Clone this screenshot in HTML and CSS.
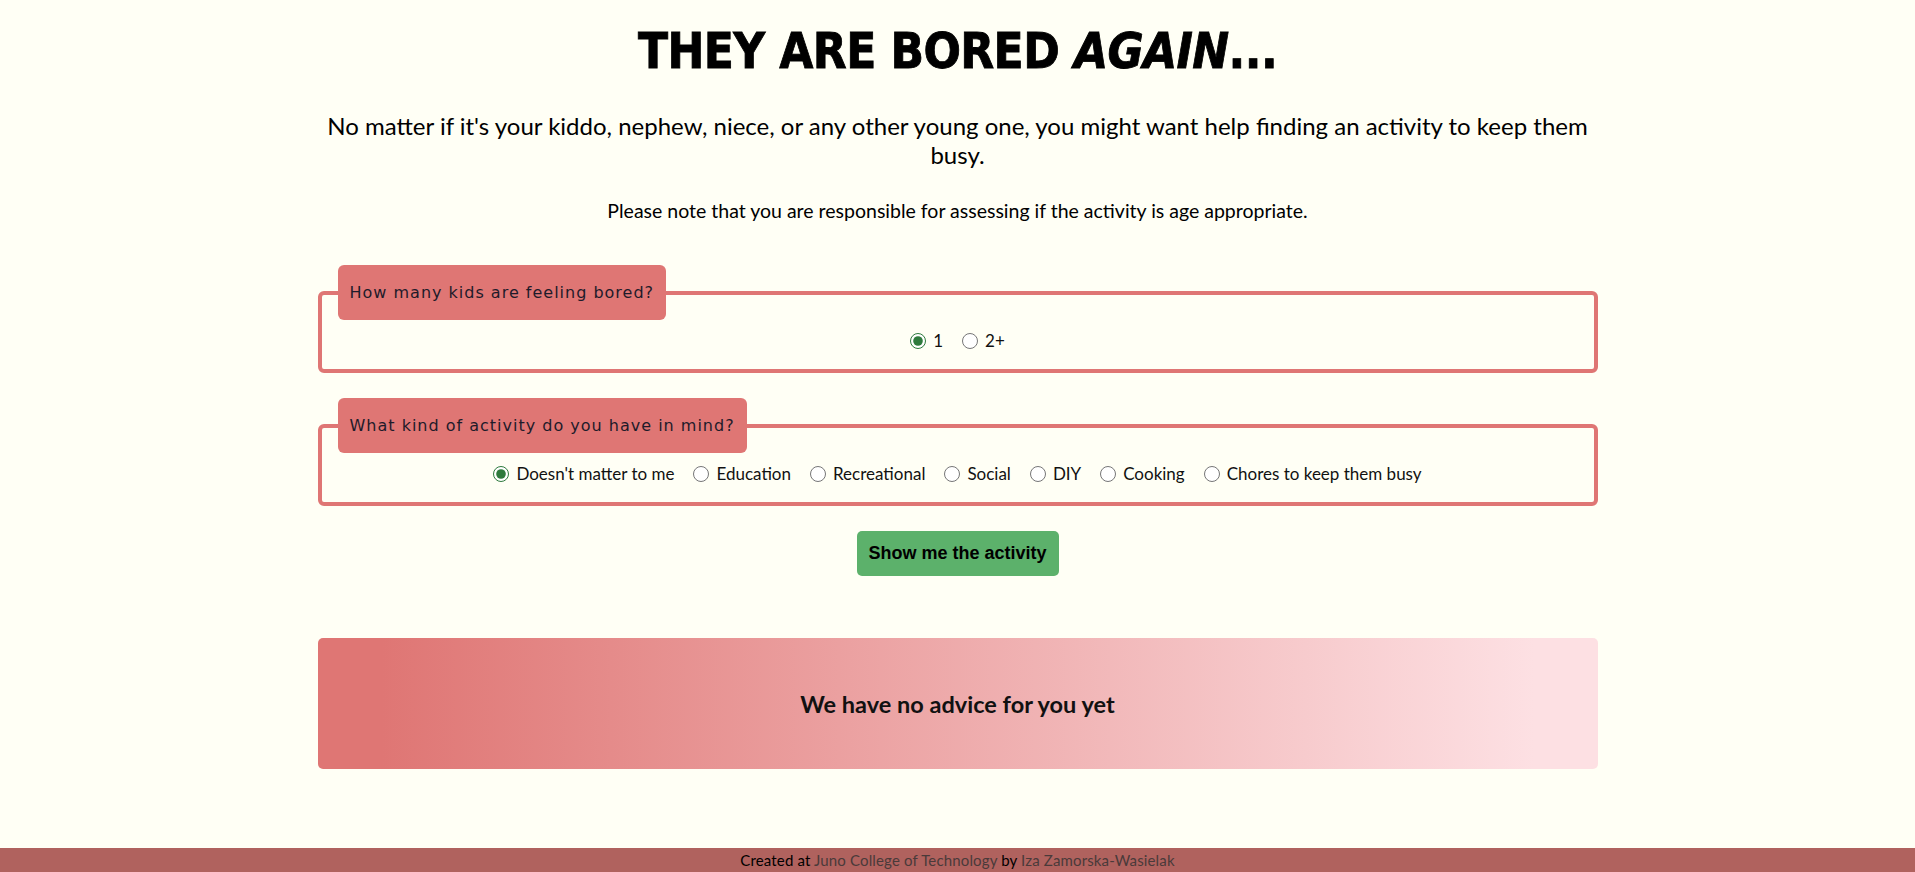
FILE: index.html
```html
<!DOCTYPE html>
<html lang="en">
<head>
<meta charset="utf-8">
<title>They are bored again...</title>
<link rel="stylesheet" href="styles.css">
</head>
<body>
<div class="page">
  <main class="wrapper">
    <header class="intro">
      <h1 class="title">THEY ARE BORED <em>AGAIN</em>...</h1>
      <p class="lead">No matter if it's your kiddo, nephew, niece, or any other young one, you might want help finding an activity to keep them busy.</p>
      <p class="note">Please note that you are responsible for assessing if the activity is age appropriate.</p>
    </header>

    <form class="form">
      <fieldset class="group">
        <legend class="group-title">How many kids are feeling bored?</legend>
        <div class="options">
          <label class="option"><input type="radio" name="kids" checked> 1</label>
          <label class="option"><input type="radio" name="kids"> 2+</label>
        </div>
      </fieldset>

      <fieldset class="group">
        <legend class="group-title">What kind of activity do you have in mind?</legend>
        <div class="options">
          <label class="option"><input type="radio" name="type" checked> Doesn't matter to me</label>
          <label class="option"><input type="radio" name="type"> Education</label>
          <label class="option"><input type="radio" name="type"> Recreational</label>
          <label class="option"><input type="radio" name="type"> Social</label>
          <label class="option"><input type="radio" name="type"> DIY</label>
          <label class="option"><input type="radio" name="type"> Cooking</label>
          <label class="option"><input type="radio" name="type"> Chores to keep them busy</label>
        </div>
      </fieldset>

      <div class="actions">
        <button type="button" class="submit">Show me the activity</button>
      </div>
    </form>

    <section class="result">
      <h2 class="result-text">We have no advice for you yet</h2>
    </section>
  </main>

  <footer class="footer">
    <p>Created at <a href="#">Juno College of Technology</a> by <a href="#">Iza Zamorska-Wasielak</a></p>
  </footer>
</div>
</body>
</html>
```

FILE: styles.css
```css
* { box-sizing: border-box; }

html, body {
  margin: 0;
  padding: 0;
}

body {
  background: #fffff5;
  color: #000;
  font-family: Lato, "Open Sans", sans-serif;
}

.page {
  min-height: 100vh;
  display: flex;
  flex-direction: column;
}

.wrapper {
  width: 1280px;
  margin: 0 auto;
}

.intro {
  text-align: center;
}

.title {
  margin: 22px 0 0;
  font-family: "DejaVu Sans Condensed", "DejaVu Sans", sans-serif;
  font-weight: 900;
  font-size: 49px;
  line-height: 60px;
  letter-spacing: -0.6px;
  -webkit-text-stroke: 0.8px #000;
}

.title em {
  font-style: italic;
}

.lead {
  margin: 29px 0 0;
  font-size: 24px;
  line-height: 29px;
}

.note {
  margin: 30px 0 0;
  font-size: 19.5px;
  line-height: 24px;
}

.form {
  margin-top: 42px;
}

.group {
  margin: 0 0 25px;
  padding: 0 16px 17px;
  border: 4px solid #df7674;
  border-radius: 6px;
  min-width: 0;
}

.group-title {
  background: #df7674;
  color: #1e1b2a;
  padding: 16px 12px;
  border-radius: 6px;
  font-family: "DejaVu Sans", sans-serif;
  font-size: 16px;
  line-height: 23px;
  letter-spacing: 1px;
}

.options {
  display: flex;
  justify-content: center;
  gap: 19px;
  margin-top: 10px;
}

.option {
  display: flex;
  align-items: center;
  font-size: 17px;
  line-height: 22px;
  color: #111;
}

.option input {
  width: 16px;
  height: 16px;
  margin: 0 7px 0 0;
  accent-color: #2e7a3c;
}

.actions {
  display: flex;
  justify-content: center;
}

.submit {
  width: 202px;
  height: 45px;
  background: #5cb16b;
  border: none;
  border-radius: 5px;
  color: #000;
  font-family: "Liberation Sans", Arial, sans-serif;
  font-weight: bold;
  font-size: 18px;
}

.result {
  margin-top: 62px;
  height: 131px;
  border-radius: 5px;
  background: linear-gradient(to right, #df7674 5%, #fde0e3 95%);
  display: flex;
  align-items: center;
  justify-content: center;
}

.result-text {
  margin: 0;
  font-size: 23.5px;
  font-weight: bold;
  color: #111;
}

.footer {
  margin-top: auto;
  background: #b0625e;
  height: 24px;
  display: flex;
  align-items: center;
  justify-content: center;
}

.footer p {
  margin: 0;
  font-size: 15px;
  letter-spacing: 0.15px;
  color: #000;
}

.footer a {
  color: #4a3a3a;
  text-decoration: none;
}
```
